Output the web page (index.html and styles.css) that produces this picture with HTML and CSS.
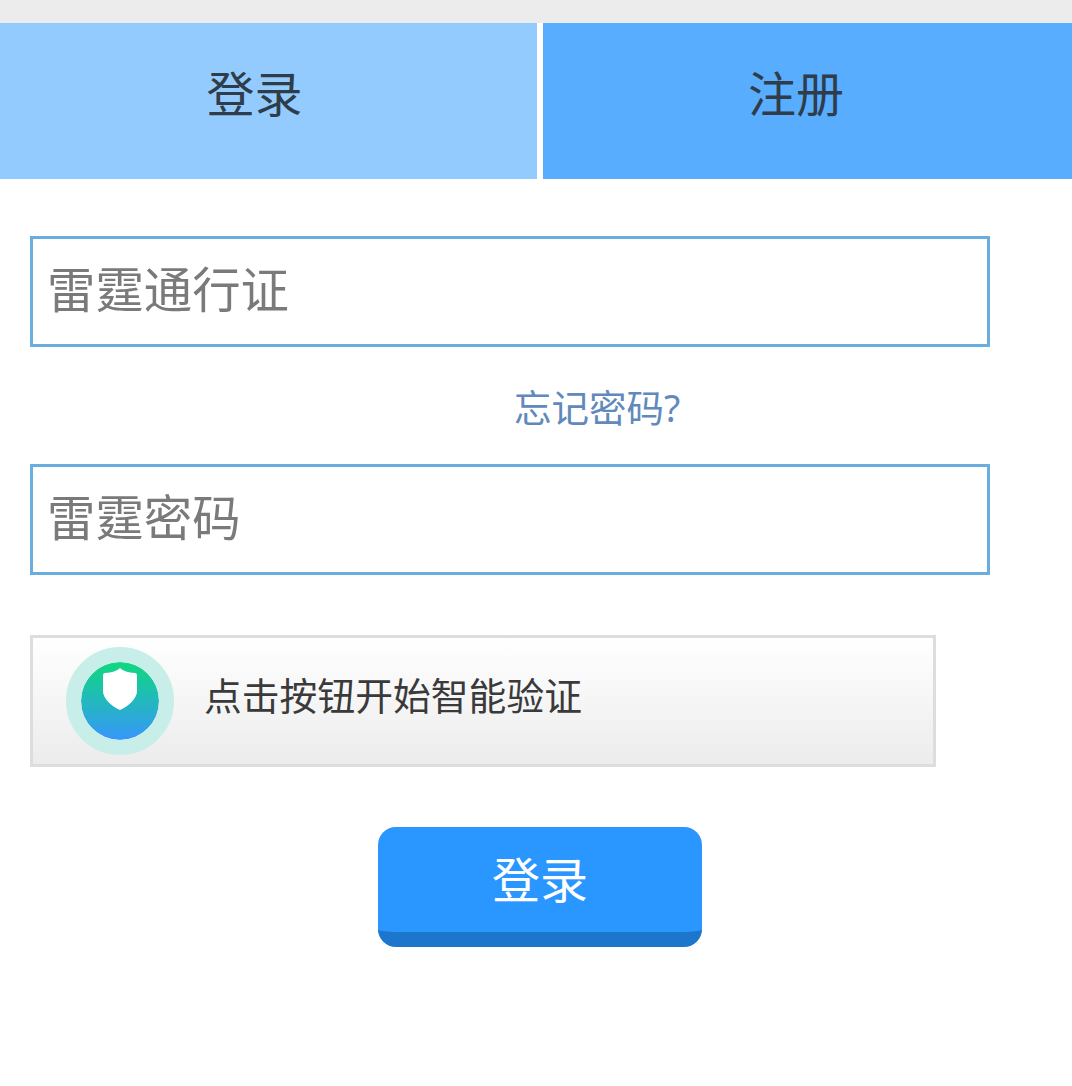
FILE: index.html
```html
<!DOCTYPE html>
<html lang="zh-CN">

<head>
    <meta charset="UTF-8">
    <meta name="viewport" content="width=device-width, initial-scale=1.0">
    <title>登录</title>

    <link rel="stylesheet" href="styles.css">
</head>

<body>
    <div class="topbar"></div>
    <div class="tabs">
        <a class="tab tab-login">登录</a>
        <a class="tab tab-register">注册</a>
    </div>
    <form class="form">
        <input class="field" type="text" placeholder="雷霆通行证">
        <a class="forgot">忘记密码?</a>
        <input class="field" type="password" placeholder="雷霆密码">
        <div class="captcha">
            <div class="captcha-icon">
                <svg class="shield" viewBox="0 0 34 42">
                    <path fill="#fff" d="M17 0C14 3 9 4.500 2 5C.8 5.100 0 6 0 7V23C0 31 9 38.500 17 42C25 38.500 34 31 34 23V7C34 6 33.200 5.100 32 5C25 4.500 20 3 17 0Z"/>
                </svg>
            </div>
            <span class="captcha-text">点击按钮开始智能验证</span>
        </div>
        <button class="submit" type="button">登录</button>
    </form>
</body>

</html>
```

FILE: styles.css
```css
body, html {
    margin: 0;
    padding: 0;
    background-color: #fff;
    font-family: "Noto Sans CJK SC", "Liberation Sans", sans-serif;
}

.topbar {
    height: 23px;
    background-color: #ececec;
}

.tabs {
    display: flex;
    gap: 6px;
    height: 156px;
}

.tab {
    box-sizing: border-box;
    display: flex;
    justify-content: center;
    align-items: center;
    padding-bottom: 20px;
    font-size: 48px;
    color: #2f3d4a;
}

.tab-login {
    width: 537px;
    padding-right: 28px;
    background-color: #94cbff;
}

.tab-register {
    flex: 1;
    padding-right: 23px;
    background-color: #59adff;
}

.form {
    display: flex;
    flex-direction: column;
    align-items: flex-start;
    padding: 57px 0 0 30px;
}

.field {
    box-sizing: border-box;
    width: 960px;
    height: 111px;
    padding: 0 14px 10px;
    border: 3px solid #6aaee0;
    border-radius: 0;
    outline: none;
    font-family: inherit;
    font-size: 48.400px;
}

.field::placeholder {
    color: #7a7a7a;
    opacity: 1;
}

.forgot {
    height: 117px;
    margin-left: 484px;
    line-height: 121px;
    font-family: "Noto Sans", "Noto Sans CJK SC", sans-serif;
    font-size: 37.500px;
    color: #6189bb;
}

.captcha {
    box-sizing: border-box;
    display: flex;
    align-items: center;
    width: 906px;
    height: 132px;
    margin-top: 60px;
    padding-left: 33px;
    border: 3px solid #ddd;
    background: linear-gradient(#fff, #ececec);
}

.captcha-icon {
    box-sizing: content-box;
    display: flex;
    justify-content: center;
    width: 78px;
    height: 78px;
    border: 15px solid #c7eee8;
    border-radius: 50%;
    background: linear-gradient(#0fd87f, #3797fb);
    background-clip: padding-box;
}

.shield {
    width: 34px;
    height: 42px;
    margin-top: 6px;
}

.captcha-text {
    margin-left: 30px;
    padding-bottom: 16px;
    font-size: 37.800px;
    color: #3a3a3a;
}

.submit {
    box-sizing: border-box;
    width: 324px;
    height: 120px;
    margin: 60px 0 0 348px;
    padding: 0 0 5px;
    border: none;
    border-bottom: 15px solid #1c76cc;
    border-radius: 18px;
    background-color: #2a96ff;
    font-family: inherit;
    font-size: 48px;
    color: #fff;
}
```
